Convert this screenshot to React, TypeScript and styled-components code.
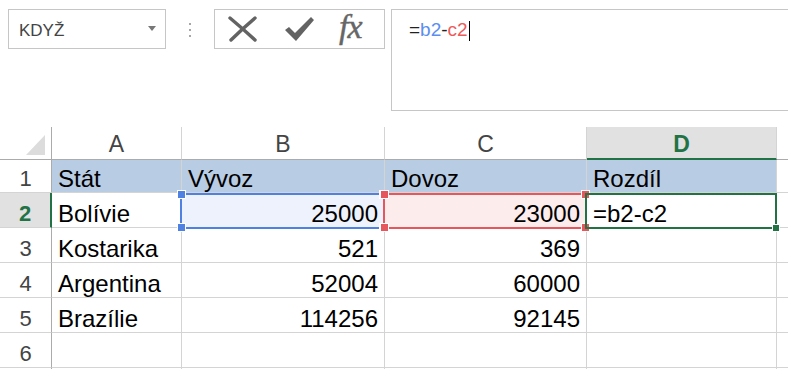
import React from 'react'
import styled, { createGlobalStyle, css } from 'styled-components'

const GlobalStyle = createGlobalStyle`
  html, body {
    margin: 0;
    padding: 0;
    background: #fff;
    overflow: hidden;
  }
  body {
    font-family: 'Liberation Sans', Arial, sans-serif;
    color: #000;
  }
`

const Page = styled.div`
  width: 788px;
  height: 369px;
  overflow: hidden;
`

const TopBar = styled.div`
  display: flex;
  align-items: flex-start;
  height: 111px;
  padding: 9px 0 0 8px;
  box-sizing: border-box;
`

const NameBox = styled.div`
  width: 158px;
  height: 40px;
  box-sizing: border-box;
  border: 1px solid #c6c6c6;
  display: flex;
  align-items: center;
  justify-content: space-between;
  padding: 4px 10px 0 10px;
`

const NameText = styled.span`
  font-size: 17px;
  color: #444;
`

const DropArrow = styled.span`
  width: 0;
  height: 0;
  margin-top: -6px;
  margin-right: -1px;
  border-left: 4px solid transparent;
  border-right: 4px solid transparent;
  border-top: 5px solid #777;
`

const Grip = styled.div`
  width: 48px;
  height: 40px;
  display: flex;
  flex-direction: column;
  align-items: center;
  justify-content: center;
  gap: 4px;
  padding-top: 1px;
  box-sizing: border-box;
`

const Dot = styled.span`
  width: 2px;
  height: 2px;
  background: #a6a6a6;
`

const ActionBox = styled.div`
  width: 171px;
  height: 40px;
  box-sizing: border-box;
  border: 1px solid #c6c6c6;
  display: flex;
  align-items: center;
  padding: 0 0 0 13px;
  gap: 26px;
`

const Fx = styled.span`
  font-family: 'Liberation Serif', 'Times New Roman', serif;
  font-style: italic;
  font-size: 34px;
  line-height: 1;
  color: #666;
  margin-top: -4px;
  margin-left: -2px;
  letter-spacing: -1px;
  -webkit-text-stroke: 0.4px #666;
`

const FormulaBar = styled.div`
  flex: 1;
  height: 102px;
  margin-left: 6px;
  margin-right: -4px;
  box-sizing: border-box;
  border: 1px solid #c6c6c6;
  padding: 9px 0 0 17px;
  font-size: 19px;
  line-height: 22px;
  color: #222;
  white-space: nowrap;
`

const Ref = styled.span<{ $color: string }>`
  color: ${p => p.$color};
`

const Caret = styled.span`
  display: inline-block;
  width: 1px;
  height: 20px;
  background: #000;
  vertical-align: -5px;
  margin-left: 1px;
`

const Sheet = styled.div`
  margin-top: 16px;
  display: grid;
  grid-template-columns: 52px 130px 203px 202px 190px 1fr;
  grid-template-rows: 33px 33px repeat(6, 35px);
`

const Corner = styled.div`
  position: relative;
  box-sizing: border-box;
  border-right: 1px solid #ababab;
  border-bottom: 1px solid #ababab;

  &::after {
    content: '';
    position: absolute;
    right: 6px;
    bottom: 4px;
    width: 0;
    height: 0;
    border-left: 19px solid transparent;
    border-bottom: 20px solid #dcdcdc;
  }
`

const ColHeader = styled.div<{ $active?: boolean }>`
  box-sizing: border-box;
  display: flex;
  align-items: center;
  justify-content: center;
  padding-top: 2px;
  font-size: 23px;
  color: #444;
  border-right: 1px solid #d4d4d4;
  border-bottom: 1px solid #ababab;
  ${p => p.$active && css`
    background: #e1e1e1;
    color: #217346;
    font-weight: bold;
    border-bottom: 2px solid #217346;
    padding-top: 3px;
  `}
`

const RowHeader = styled.div<{ $active?: boolean }>`
  box-sizing: border-box;
  display: flex;
  align-items: flex-end;
  justify-content: center;
  padding-bottom: 2px;
  font-size: 22px;
  line-height: 1;
  color: #444;
  border-right: 1px solid #ababab;
  border-bottom: 1px solid #d4d4d4;
  ${p => p.$active && css`
    background: #e1e1e1;
    color: #217346;
    font-weight: bold;
    border-right: 2px solid #217346;
  `}
`

const Cell = styled.div<{ $fill?: string; $right?: boolean }>`
  position: relative;
  box-sizing: border-box;
  display: flex;
  align-items: flex-end;
  justify-content: ${p => (p.$right ? 'flex-end' : 'flex-start')};
  padding: 0 6px 1px 6px;
  font-size: 24px;
  line-height: 1;
  white-space: nowrap;
  background: ${p => p.$fill || '#fff'};
  border-right: 1px solid #d4d4d4;
  border-bottom: 1px solid #d4d4d4;
`

const RangeBox = styled.span<{ $color: string; $z: number }>`
  position: absolute;
  top: 0;
  left: -2px;
  right: -1px;
  bottom: -2px;
  border: 2px solid ${p => p.$color};
  pointer-events: none;
  z-index: ${p => p.$z};
`

const Handle = styled.span<{ $color: string; $v: 'top' | 'bottom'; $h: 'left' | 'right'; $size?: number }>`
  position: absolute;
  ${p => p.$v}: -5px;
  ${p => p.$h}: -5px;
  width: ${p => p.$size || 7}px;
  height: ${p => p.$size || 7}px;
  background: ${p => p.$color};
  border: 1px solid #fff;
`

const corners: Array<['top' | 'bottom', 'left' | 'right']> = [
  ['top', 'left'],
  ['top', 'right'],
  ['bottom', 'left'],
  ['bottom', 'right'],
]

const RefRange = ({ color, z }: { color: string; z: number }) => (
  <RangeBox $color={color} $z={z}>
    {corners.map(([v, h]) => (
      <Handle key={v + h} $color={color} $v={v} $h={h} />
    ))}
  </RangeBox>
)

const BLUE = '#4f81e3'
const RED = '#e5575d'
const GREEN = '#217346'
const HEAD = '#b8cce4'

const rows = [
  ['Kostarika', '521', '369'],
  ['Argentina', '52004', '60000'],
  ['Brazílie', '114256', '92145'],
]

const CloseIcon = () => (
  <svg width="30" height="26" viewBox="0 0 30 26">
    <path d="M2 2 Q14 12 27 24 M27 2 Q14 13 3 24" stroke="#636363" strokeWidth="3.4" fill="none" strokeLinecap="round" />
  </svg>
)

const CheckIcon = () => (
  <svg width="31" height="26" viewBox="0 0 31 26">
    <path d="M1 14 L5 11 L11 17 L27 1 L30 4 L12 25 Z" fill="#636363" />
  </svg>
)

const App = () => (
  <Page>
    <GlobalStyle />
    <TopBar>
      <NameBox>
        <NameText>KDYŽ</NameText>
        <DropArrow />
      </NameBox>
      <Grip>
        <Dot />
        <Dot />
        <Dot />
      </Grip>
      <ActionBox>
        <CloseIcon />
        <CheckIcon />
        <Fx>fx</Fx>
      </ActionBox>
      <FormulaBar>
        =<Ref $color="#5b8ef0">b2</Ref>-<Ref $color="#ee5a5a">c2</Ref>
        <Caret />
      </FormulaBar>
    </TopBar>

    <Sheet>
      <Corner />
      <ColHeader>A</ColHeader>
      <ColHeader>B</ColHeader>
      <ColHeader>C</ColHeader>
      <ColHeader $active>D</ColHeader>
      <ColHeader />

      <RowHeader>1</RowHeader>
      <Cell $fill={HEAD}>Stát</Cell>
      <Cell $fill={HEAD}>Vývoz</Cell>
      <Cell $fill={HEAD}>Dovoz</Cell>
      <Cell $fill={HEAD}>Rozdíl</Cell>
      <Cell />

      <RowHeader $active>2</RowHeader>
      <Cell>Bolívie</Cell>
      <Cell $fill="#edf2fc" $right>
        25000
        <RefRange color={BLUE} z={1} />
      </Cell>
      <Cell $fill="#fcecec" $right>
        23000
        <RefRange color={RED} z={2} />
      </Cell>
      <Cell>
        =b2-c2
        <RangeBox $color={GREEN} $z={3}>
          <Handle $color={GREEN} $v="bottom" $h="right" $size={6} />
        </RangeBox>
      </Cell>
      <Cell />

      {rows.map((r, i) => (
        <React.Fragment key={r[0]}>
          <RowHeader>{i + 3}</RowHeader>
          <Cell>{r[0]}</Cell>
          <Cell $right>{r[1]}</Cell>
          <Cell $right>{r[2]}</Cell>
          <Cell />
          <Cell />
        </React.Fragment>
      ))}

      {['6', ''].map((n, i) => (
        <React.Fragment key={i}>
          <RowHeader>{n}</RowHeader>
          <Cell />
          <Cell />
          <Cell />
          <Cell />
          <Cell />
        </React.Fragment>
      ))}
    </Sheet>
  </Page>
)

export default App
